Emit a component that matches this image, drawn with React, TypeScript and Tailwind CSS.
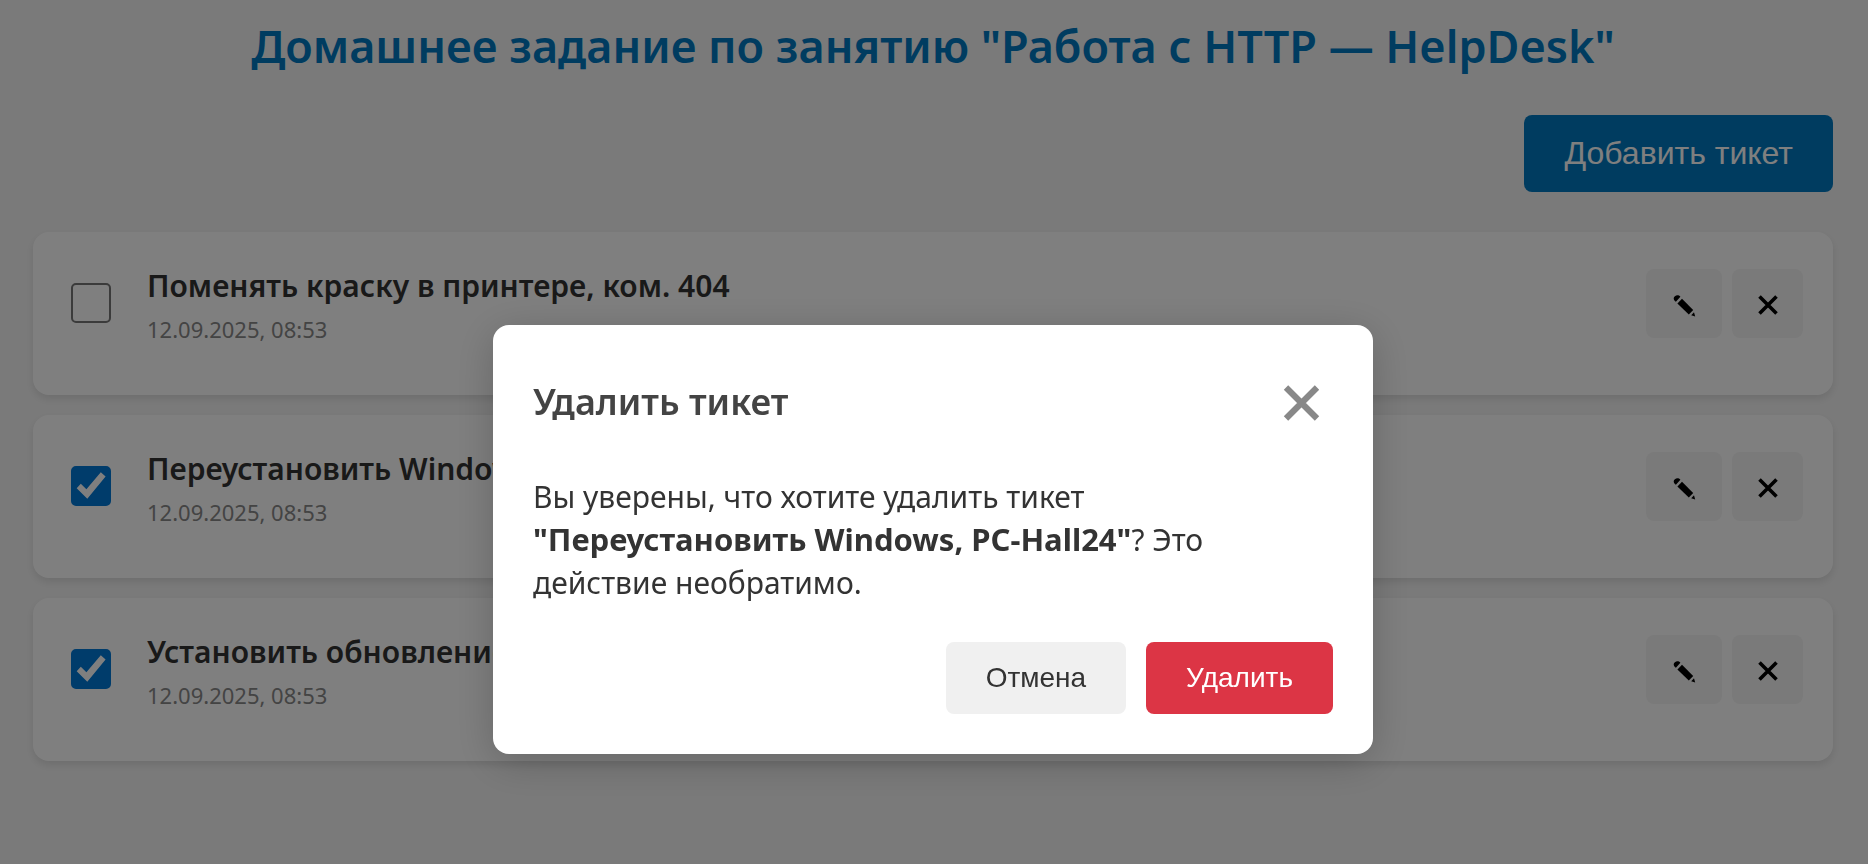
import { useState } from 'react';

type Ticket = { id: number; name: string; created: string; done: boolean };

const initialTickets: Ticket[] = [
  { id: 1, name: 'Поменять краску в принтере, ком. 404', created: '12.09.2025, 08:53', done: false },
  { id: 2, name: 'Переустановить Windows, PC-Hall24', created: '12.09.2025, 08:53', done: true },
  { id: 3, name: 'Установить обновление', created: '12.09.2025, 08:53', done: true },
];

function PencilIcon() {
  return (
    <svg viewBox="0 0 28 28" className="size-7" fill="currentColor" aria-hidden="true">
      <path d="M5.2 11.2C3.2 9.4 3.3 7.4 4.9 6.2 6.6 4.8 8.8 4.9 10.4 6.7L5.9 11.8Z" />
      <path d="M12 8.8L23.2 20.1 18.8 24.6 7.4 13.4Z" />
      <path d="M24 22.2L25.2 26.6 21.2 25.3Z" />
    </svg>
  );
}

function CrossIcon() {
  return (
    <svg viewBox="0 0 28 28" className="size-7" stroke="currentColor" strokeWidth="3.6" aria-hidden="true">
      <path d="M5.5 6.5L22.5 23.5M22.5 6.5L5.5 23.5" />
    </svg>
  );
}

function TicketCard({ ticket, onToggle }: { ticket: Ticket; onToggle: () => void }) {
  const inputId = `ticket-${ticket.id}`;
  return (
    <li className="flex min-h-[163px] items-start rounded-2xl bg-white pt-[37px] pr-[30px] pb-6 pl-[38px] shadow-[0_4px_8px_rgba(0,0,0,0.1)]">
      <span className="mt-[14px] grid size-10 shrink-0">
        <input
          id={inputId}
          type="checkbox"
          checked={ticket.done}
          onChange={onToggle}
          className="peer col-start-1 row-start-1 size-10 appearance-none rounded-[5px] border-2 border-[#767676] checked:border-[#0078d7] checked:bg-[#0078d7]"
        />
        <svg
          viewBox="0 0 40 40"
          className="pointer-events-none col-start-1 row-start-1 hidden size-10 peer-checked:block"
          fill="white"
          aria-hidden="true"
        >
          <path d="M5.7 22.3L9.8 17.7 15.4 23.2 29.8 6.3 34.6 10.5 16.3 32.7Z" />
        </svg>
      </span>
      <div className="ml-9 min-w-0 flex-1">
        <label htmlFor={inputId} className="block text-[30px] leading-[34px] font-semibold text-[#333]">
          {ticket.name}
        </label>
        <time className="mt-[10px] block text-[22px] leading-8 text-[#888]">{ticket.created}</time>
      </div>
      <div className="flex gap-[10px]">
        <button type="button" aria-label="Редактировать" className="flex h-[69px] w-[76px] items-center justify-center rounded-lg bg-[#f5f5f5] text-black">
          <PencilIcon />
        </button>
        <button type="button" aria-label="Удалить" className="flex h-[69px] w-[71px] items-center justify-center rounded-lg bg-[#f5f5f5] text-black">
          <CrossIcon />
        </button>
      </div>
    </li>
  );
}

function DeleteDialog() {
  return (
    <div className="fixed inset-0 flex items-start justify-center bg-black/50 pt-[325px] pr-[2px]">
      <section
        role="dialog"
        aria-modal="true"
        aria-labelledby="delete-title"
        className="w-full max-w-[880px] rounded-2xl bg-white p-10 text-[#333] shadow-[0_8px_40px_rgba(0,0,0,0.2)]"
      >
        <header className="flex items-start justify-between pt-2 pr-[9px]">
          <h2 id="delete-title" className="text-4xl leading-[58px] font-semibold text-[#444]">
            Удалить тикет
          </h2>
          <button type="button" aria-label="Закрыть" className="mt-2 text-[#888]">
            <svg viewBox="0 0 44 44" className="size-11" stroke="currentColor" strokeWidth="6.2" aria-hidden="true">
              <path d="M6 6.5L37 37.5M37 6.5L6 37.5" />
            </svg>
          </button>
        </header>
        <p className="mt-11 pr-10 text-[30px] leading-[43px]">
          Вы уверены, что хотите удалить тикет{' '}
          <strong className="text-[31px] font-bold">"Переустановить Windows, PC-Hall24"</strong>? Это действие
          необратимо.
        </p>
        <footer className="mt-[38px] flex justify-end gap-5 font-['Liberation_Sans',Arial,sans-serif] text-[28px] leading-8">
          <button type="button" className="rounded-lg bg-[#f0f0f0] px-10 py-5">Отмена</button>
          <button type="button" className="rounded-lg bg-[#dc3545] px-10 py-5 text-white">Удалить</button>
        </footer>
      </section>
    </div>
  );
}

export default function App() {
  const [tickets, setTickets] = useState(initialTickets);
  const toggle = (id: number) =>
    setTickets((list) => list.map((t) => (t.id === id ? { ...t, done: !t.done } : t)));

  return (
    <div className="min-h-screen bg-[#f5f5f5] font-['Noto_Sans','Open_Sans',sans-serif]">
      <main className="mx-auto max-w-[1868px] pr-[35px] pl-[33px]">
        <h1 className="pt-4 text-center text-[45px] leading-[60px] font-semibold text-[#0078c1]">
          Домашнее задание по занятию "Работа с HTTP — HelpDesk"
        </h1>
        <div className="mt-[39px] flex justify-end">
          <button
            type="button"
            className="rounded-lg bg-[#0078c1] px-10 py-5 font-['Liberation_Sans',Arial,sans-serif] text-[32px] leading-[37px] text-white"
          >
            Добавить тикет
          </button>
        </div>
        <ul className="mt-10 flex flex-col gap-5">
          {tickets.map((ticket) => (
            <TicketCard key={ticket.id} ticket={ticket} onToggle={() => toggle(ticket.id)} />
          ))}
        </ul>
      </main>
      <DeleteDialog />
    </div>
  );
}
